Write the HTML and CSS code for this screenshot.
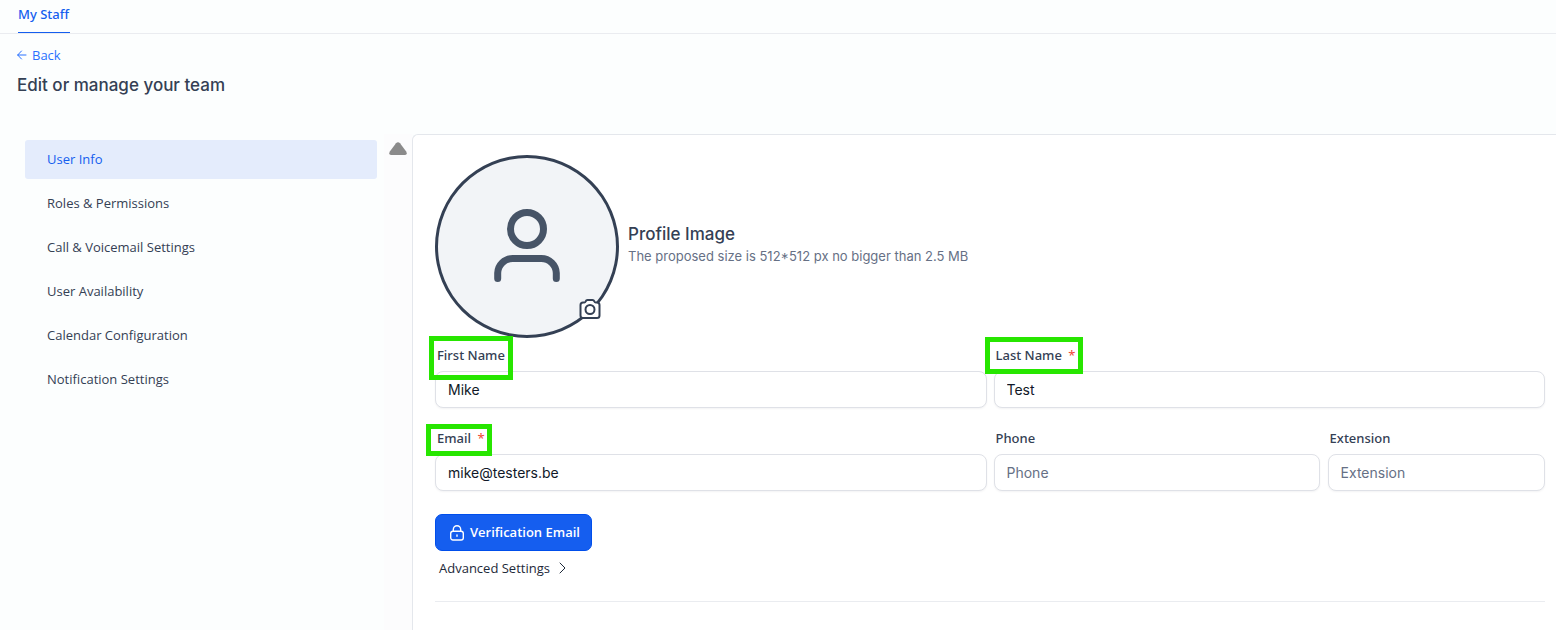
FILE: index.html
```html
<!DOCTYPE html>
<html lang="en">
<head>
  <meta charset="UTF-8" />
  <meta name="viewport" content="width=device-width, initial-scale=1.0"/>
  <title>My Staff</title>
  <link rel="stylesheet" href="styles.css">
</head>
<body>
  <nav class="tabs">
    <a href="#" class="tab active">My Staff</a>
  </nav>

  <header class="page-header">
    <a href="#" class="back">
      <svg width="10" height="10" viewBox="0 0 10 10"><path d="M9 5H.7M4.500 1L.7 5l3.800 4"/></svg>
      Back
    </a>
    <h1>Edit or manage your team</h1>
  </header>

  <div class="layout">
    <nav class="sidebar">
      <a href="#" class="active">User Info</a>
      <a href="#">Roles &amp; Permissions</a>
      <a href="#">Call &amp; Voicemail Settings</a>
      <a href="#">User Availability</a>
      <a href="#">Calendar Configuration</a>
      <a href="#">Notification Settings</a>
    </nav>

    <div class="scroll-track">
      <svg width="18" height="14" viewBox="0 0 18 14"><path d="M7 1.200Q9 -.7 11 1.200L17.200 9.600Q18.800 13 16 13H2Q-.8 13 .8 9.600Z"/></svg>
    </div>

    <main class="panel">
      <div class="profile">
        <div class="avatar">
          <svg class="person" width="68" height="76" viewBox="0 0 68 76">
            <circle cx="34" cy="20" r="16.500"/>
            <path d="M4.700 69.500V64A15 15 0 0 1 19.700 49.500H48.300A15 15 0 0 1 63.300 64V69.500"/>
          </svg>
          <button type="button" class="camera" aria-label="Change profile image">
            <svg width="22" height="20" viewBox="0 0 22 20">
              <path d="M4 3.500h1.200Q6.200 3.500 6.700 2.400Q7.200 1 8.500 1h5Q14.800 1 15.300 2.400Q15.800 3.500 16.800 3.500H18Q20.500 3.500 20.500 6v10.500Q20.500 19 18 19H4Q1.500 19 1.500 16.500V6Q1.500 3.500 4 3.500Z"/>
              <circle cx="11" cy="10.500" r="4.500"/>
            </svg>
          </button>
        </div>
        <div class="profile-text">
          <h2>Profile Image</h2>
          <p>The proposed size is 512*512 px no bigger than 2.5 MB</p>
        </div>
      </div>

      <form>
        <div class="form-grid">
          <div class="field">
            <label for="firstName" class="marked first">First Name</label>
            <input type="text" id="firstName" value="Mike">
          </div>
          <div class="field">
            <label for="lastName" class="marked last">Last Name <span class="required">*</span></label>
            <input type="text" id="lastName" value="Test">
          </div>
          <div class="field">
            <label for="email" class="marked email">Email <span class="required">*</span></label>
            <input type="email" id="email" value="mike@testers.be">
          </div>
          <div class="phone-row">
            <div class="field">
              <label for="phone">Phone</label>
              <input type="tel" id="phone" placeholder="Phone">
            </div>
            <div class="field">
              <label for="extension">Extension</label>
              <input type="text" id="extension" placeholder="Extension">
            </div>
          </div>
        </div>

        <button type="button" class="btn-primary">
          <svg width="14" height="16" viewBox="0 0 14 16">
            <rect x=".7" y="6.200" width="12.600" height="8.800" rx="2.200"/>
            <path d="M3.300 6V4.400a3.700 3.700 0 0 1 7.400 0V6M7 10v1.200"/>
          </svg>
          Verification Email
        </button>

        <button type="button" class="advanced">
          Advanced Settings
          <svg width="7" height="12" viewBox="0 0 7 12"><path d="M1 1l5 5-5 5"/></svg>
        </button>
      </form>
      <hr>
    </main>
  </div>
</body>
</html>
```

FILE: styles.css
```css
* {
  box-sizing: border-box;
}

body {
  margin: 0;
  min-height: 100vh;
  display: flex;
  flex-direction: column;
  font-family: "Open Sans", "Noto Sans", sans-serif;
  font-size: 13px;
  line-height: 20px;
  color: #344054;
  background: #fcfefe;
}

a {
  text-decoration: none;
}

button {
  font: inherit;
  cursor: pointer;
}

svg {
  fill: none;
  stroke: currentColor;
  stroke-linecap: round;
  stroke-linejoin: round;
}

h1, h2, p {
  margin: 0;
  font-family: Inter, sans-serif;
}

h1, h2 {
  font-size: 17px;
  font-weight: 500;
  line-height: 24px;
}

/* ---- Header ---- */
.tabs {
  display: flex;
  padding-left: 18px;
  border-bottom: 1px solid #eaecf0;
}

.tab {
  padding: 4px 1px 8px 0;
  border-bottom: 1px solid #155eef;
  color: #155eef;
}

.tab,
label {
  font-family: "Noto Sans", sans-serif;
  font-weight: 500;
}

.page-header {
  padding: 11px 17px 37px;
}

.back {
  display: inline-flex;
  align-items: center;
  gap: 5px;
  margin-bottom: 8px;
  color: #2970ff;
}

/* ---- Layout ---- */
.layout {
  flex: 1;
  display: grid;
  grid-template-columns: 384px 28px 1fr;
}

.sidebar {
  display: flex;
  flex-direction: column;
  gap: 5px;
  padding: 6px 7px 0 25px;
}

.sidebar a {
  padding: 10px 22px;
  line-height: 19px;
  border-radius: 3px;
  color: #344054;
}

.sidebar a.active {
  background: #e4ecfc;
  color: #155eef;
}

.scroll-track {
  padding: 8px 5px;
  background: #fcfcfd;
}

.scroll-track svg {
  display: block;
  fill: #8b8b8b;
  stroke: none;
}

.panel {
  padding: 20px 11px 28px 22px;
  background: #fff;
  border-top: 1px solid #e4e7ec;
  border-left: 1px solid #e4e7ec;
  border-top-left-radius: 6px;
}

/* ---- Profile ---- */
.profile {
  display: flex;
  align-items: center;
  gap: 9px;
  margin-bottom: 7px;
}

.profile-text {
  padding-bottom: 6px;
}

.profile p {
  color: #667085;
}

.avatar {
  position: relative;
  width: 184px;
  height: 183px;
  display: flex;
  align-items: center;
  justify-content: center;
  border: 3px solid #344054;
  border-radius: 50%;
  background: #f2f4f7;
}

.person {
  color: #475467;
  stroke-width: 7;
}

.camera {
  position: absolute;
  right: 15px;
  bottom: 16px;
  display: flex;
  padding: 0;
  border: none;
  background: none;
  color: #344054;
}

.camera svg {
  fill: #fff;
  stroke-width: 2;
}

/* ---- Form ---- */
.form-grid {
  display: grid;
  grid-template-columns: 1fr 1fr;
  gap: 20px 7px;
}

.phone-row {
  display: grid;
  grid-template-columns: 3fr 2fr;
  gap: 8px;
}

.field {
  display: flex;
  flex-direction: column;
  align-items: flex-start;
  gap: 6px;
  min-width: 0;
}

label {
  padding-left: 2px;
}

input {
  width: 100%;
  height: 37px;
  padding: 0 12px;
  border: 1px solid #dfe1e7;
  border-radius: 8px;
  background: #fff;
  box-shadow: 0 1px 2px rgba(16, 24, 40, 0.05);
  font-family: Inter, sans-serif;
  font-size: 14px;
  color: #101828;
}

input::placeholder {
  color: #667085;
}

.required {
  margin-left: 3px;
  color: #f04438;
  font-weight: 400;
}

.marked {
  position: relative;
}

.marked::after {
  content: "";
  position: absolute;
  border: 5px solid #27e600;
  pointer-events: none;
}

.first::after {
  inset: -9px -8px -15px -6px;
}

.last::after {
  inset: -8px -8px -9px -9px;
}

.email::after {
  inset: -4px -7px -8px -9px;
}

.btn-primary {
  display: flex;
  align-items: center;
  gap: 6px;
  margin-top: 23px;
  padding: 8px 11px 8px 14px;
  border: 1px solid #004eeb;
  border-radius: 7px;
  background: #155eef;
  color: #fff;
  line-height: 19px;
  font-weight: 600;
}

.btn-primary svg {
  stroke-width: 1.400;
}

.advanced {
  display: flex;
  align-items: center;
  gap: 9px;
  margin-top: 7px;
  padding: 0 4px;
  border: none;
  background: none;
  color: #1d2939;
}

hr {
  margin: 23px 0 0;
  border: none;
  border-top: 1px solid #eaecf0;
}
```
